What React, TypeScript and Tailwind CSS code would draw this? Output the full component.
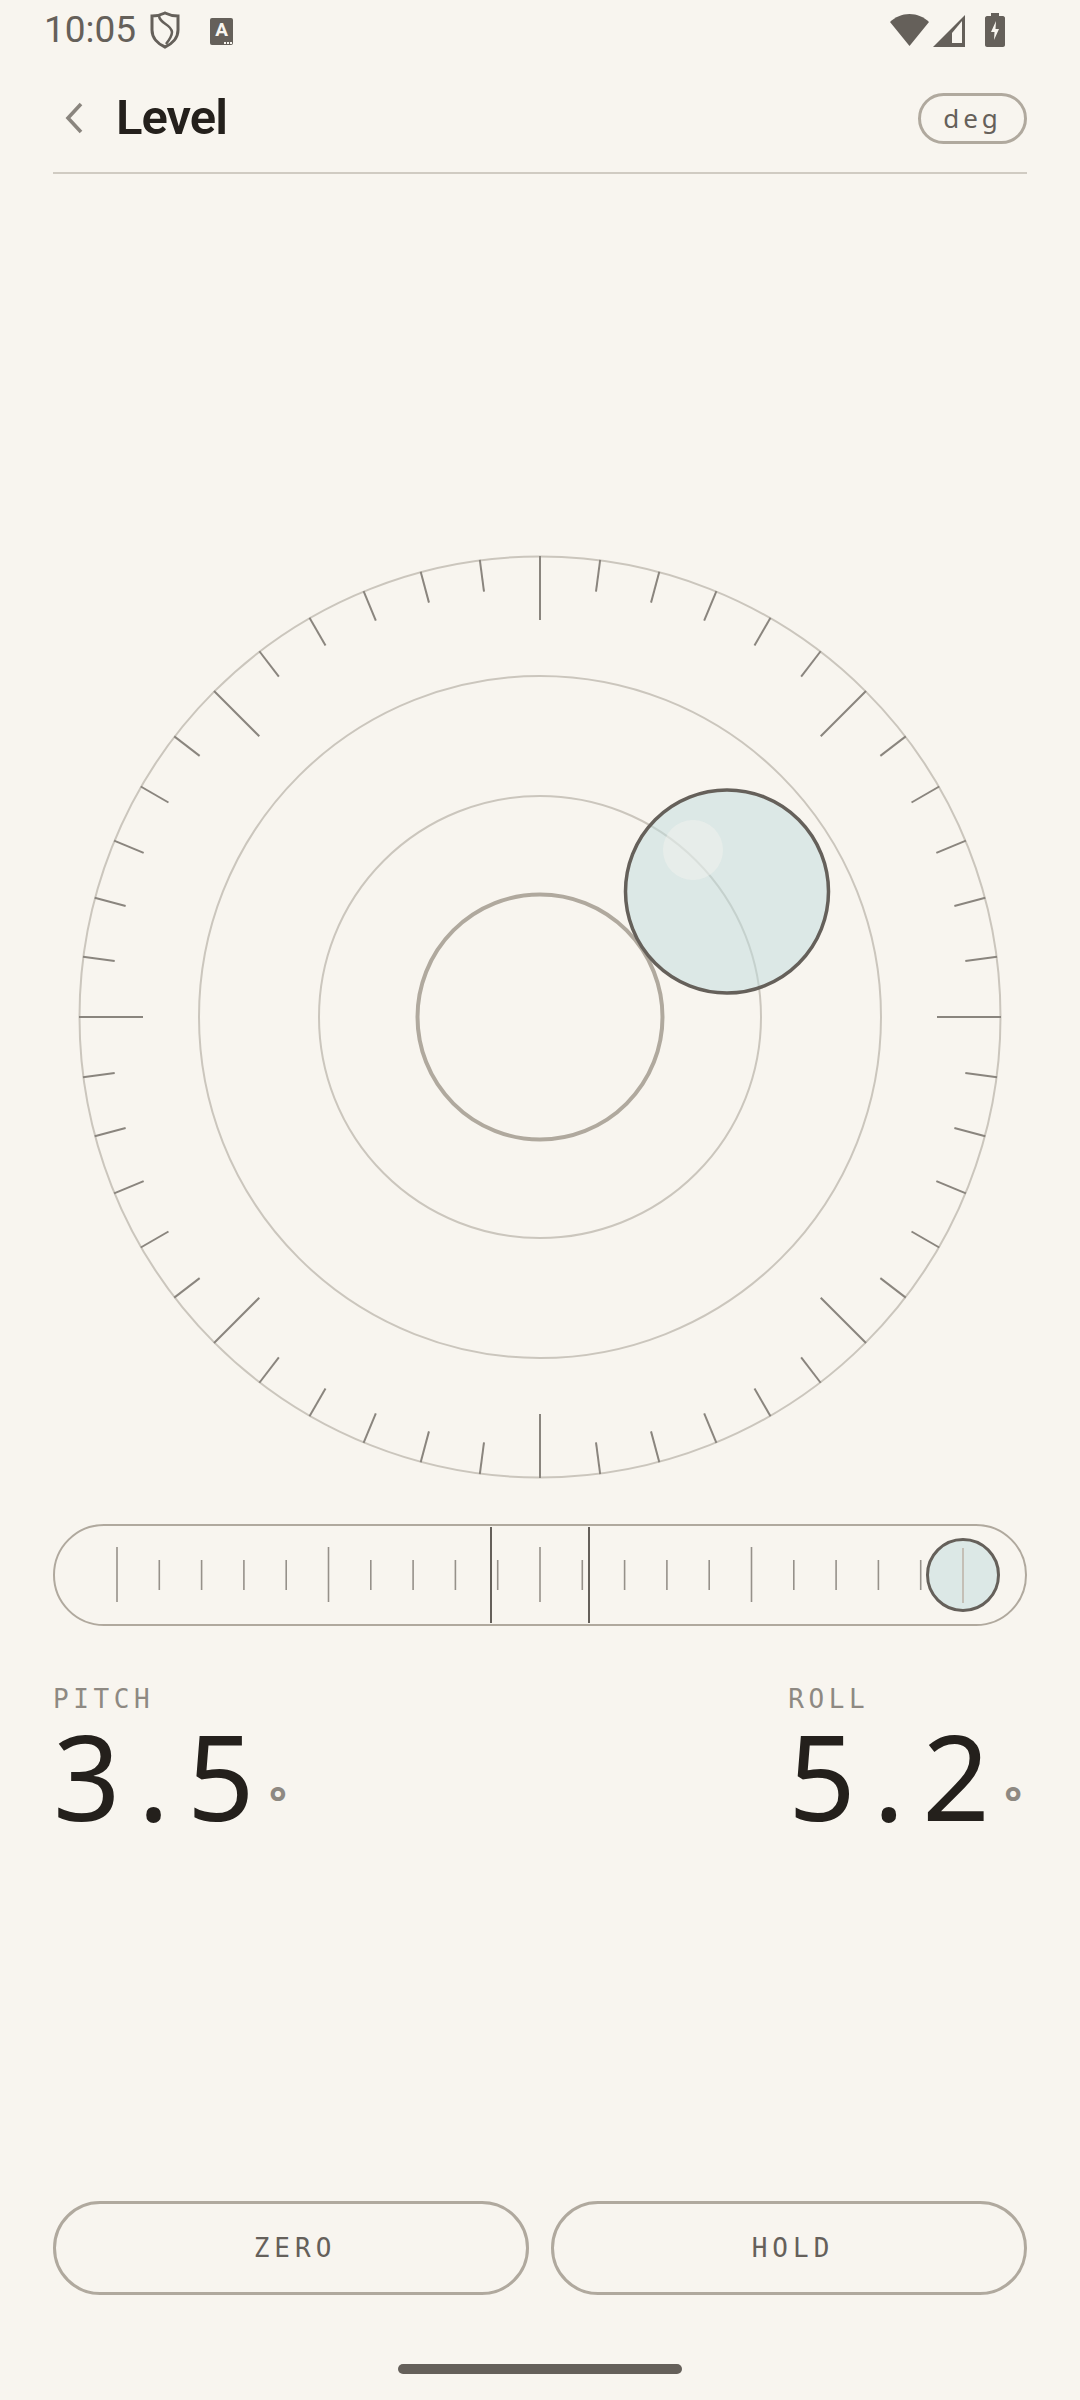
import React from "react";

const dialTicks = Array.from({ length: 48 }, (_, i) => {
  const a = (i * 7.5 * Math.PI) / 180;
  const long = i % 6 === 0;
  const r1 = 461;
  const r2 = long ? 397 : 429;
  return {
    x1: 462 + Math.sin(a) * r1,
    y1: 462 - Math.cos(a) * r1,
    x2: 462 + Math.sin(a) * r2,
    y2: 462 - Math.cos(a) * r2,
    key: i,
  };
});

const Dial = () => (
  <svg width="924" height="924" viewBox="0 0 924 924" className="block mx-auto shrink-0">
    <circle cx="462" cy="462" r="460.5" fill="none" stroke="#cbc6bd" strokeWidth="2" />
    <circle cx="462" cy="462" r="341" fill="none" stroke="#cbc6bd" strokeWidth="2" />
    <circle cx="462" cy="462" r="221" fill="none" stroke="#cbc6bd" strokeWidth="2" />
    <circle cx="462" cy="462" r="122.5" fill="none" stroke="#b0a99e" strokeWidth="4" />
    {dialTicks.map((t) => (
      <line key={t.key} x1={t.x1} y1={t.y1} x2={t.x2} y2={t.y2} stroke="#8a857e" strokeWidth="2" />
    ))}
    <circle cx="649" cy="336.5" r="101.5" fill="rgb(192,219,221)" fillOpacity="0.5" stroke="#65605a" strokeWidth="3.5" />
    <circle cx="615" cy="295" r="30" fill="#f8f5ef" fillOpacity="0.4" />
  </svg>
);

const Slider = () => {
  const ticks = Array.from({ length: 21 }, (_, i) => i);
  return (
    <div className="relative mx-[53px] mt-[45px] h-[102px] shrink-0 rounded-full border-2 border-[#b0a99e]">
      <svg width="974" height="102" viewBox="0 0 974 102" className="absolute left-[-2px] top-[-2px]">
        {ticks.map((i) => {
          const x = 487 + (i - 10) * 42.3;
          const long = i % 5 === 0;
          return (
            <line
              key={i}
              x1={x}
              x2={x}
              y1={long ? 23 : 36}
              y2={long ? 78 : 66}
              stroke="#96918a"
              strokeWidth="1.6"
            />
          );
        })}
        <line x1="438" x2="438" y1="3" y2="99" stroke="#65605a" strokeWidth="2" />
        <line x1="536" x2="536" y1="3" y2="99" stroke="#65605a" strokeWidth="2" />
      </svg>
      <div className="absolute left-[871px] top-[12px] flex h-[74px] w-[74px] items-center justify-center rounded-full border-[3px] border-[#65605a] bg-[#dce8e6]">
        <div className="h-[55px] w-[2px] bg-[#c4bfb6]" />
      </div>
    </div>
  );
};

const Cell = ({ c }: { c: string }) => (
  <span className="inline-block w-[67px] text-center">{c}</span>
);

const Reading = ({ label, value }: { label: string; value: string }) => (
  <div className="flex flex-col">
    <div className="h-[30px] text-[26px] leading-[30px] tracking-[4.6px] text-[#8e8982] font-['DejaVu_Sans_Mono','Liberation_Mono',monospace] font-light">
      {label}
    </div>
    <div className="mt-[8px] flex h-[108px] items-center text-[118px] leading-[108px] font-[450] text-[#24201c] font-['Noto_Sans',sans-serif]">
      {value.split("").map((c, i) => (
        <Cell key={i} c={c} />
      ))}
      <span className="ml-[15px] mt-[50px] text-[42px] leading-[42px] font-bold text-[#8e8982] font-['Noto_Sans',sans-serif]">°</span>
    </div>
  </div>
);

const Btn = ({ label }: { label: string }) => (
  <button className="flex h-[94px] flex-1 items-center justify-center rounded-full border-[3px] border-[#b0a99e] pl-[8px] text-[26px] tracking-[5px] text-[#65605a] font-['DejaVu_Sans_Mono','Liberation_Mono',monospace]">
    {label}
  </button>
);

export default function App() {
  return (
    <div className="flex h-[2400px] w-[1080px] flex-col overflow-hidden bg-[#f8f5ef]">
      <div className="flex h-[60px] shrink-0 items-center pl-[44px] pr-[75px] text-[#65605a]">
        <span className="text-[37px] leading-[60px] font-['Roboto',sans-serif]">10:05</span>
        <svg width="32" height="38" viewBox="0 0 32 38" className="ml-[13px]">
          <path d="M16 2 C20 4 25 5 29 5 L29 19 C29 27 23 33 16 36 C9 33 3 27 3 19 L3 5 C7 5 12 4 16 2 Z" fill="none" stroke="#65605a" strokeWidth="3" />
          <path d="M10 5 C11 13 22 13 23 21 C23 25 21 28 17 33" fill="none" stroke="#65605a" strokeWidth="2.5" />
        </svg>
        <div className="relative ml-[29px] mt-[2px] flex h-[27px] w-[23px] items-start justify-center rounded-[2px] bg-[#65605a]">
          <span className="mt-[3px] text-[19px] leading-[17px] font-bold text-[#f8f5ef] font-['Roboto',sans-serif]">A</span>
          <div className="absolute bottom-[1px] right-[1px] flex gap-[1px]">
            <div className="h-[2px] w-[2px] bg-[#f8f5ef]" />
            <div className="h-[2px] w-[2px] bg-[#f8f5ef]" />
            <div className="h-[2px] w-[2px] bg-[#f8f5ef]" />
          </div>
        </div>
        <div className="flex-1" />
        <svg width="40" height="34" viewBox="0 0 40 34">
          <path d="M19.5 33 L0 9 C5 4 12 1 19.5 1 C27 1 34 4 39 9 Z" fill="#65605a" />
        </svg>
        <svg width="34" height="34" viewBox="0 0 34 34" className="ml-[3px]">
          <path d="M0 34 L32 2 L32 34 Z" fill="#65605a" />
          <path d="M19 30 L19 20 L29 8 L29 30 Z" fill="#f8f5ef" />
        </svg>
        <svg width="20" height="34" viewBox="0 0 20 34" className="ml-[18px]">
          <path d="M6 0 H14 V3 H18 C19 3 20 4 20 5 V32 C20 33 19 34 18 34 H2 C1 34 0 33 0 32 V5 C0 4 1 3 2 3 H6 Z" fill="#65605a" />
          <path d="M11 8 L6 19 H9.5 L9 27 L14 16 H10.5 Z" fill="#f8f5ef" />
        </svg>
      </div>

      <div className="mx-[53px] flex h-[114px] shrink-0 items-center border-b-2 border-[#d0cbc2] pt-[4px]">
        <svg width="20" height="32" viewBox="0 0 20 32" className="ml-[11px] mt-[-1px]">
          <path d="M17 2 L4 16 L17 30" fill="none" stroke="#8a857e" strokeWidth="3.6" />
        </svg>
        <span className="ml-[32px] text-[49px] font-semibold tracking-[-1px] text-[#24201c] font-['Roboto',sans-serif]">Level</span>
        <div className="ml-auto flex h-[51px] w-[109px] items-center justify-center rounded-full border-[3px] border-[#b0a99e] text-[26px] tracking-[4px] text-[#65605a] font-['Noto_Sans',sans-serif]">
          deg
        </div>
      </div>

      <div className="mt-[381px] shrink-0">
        <Dial />
      </div>

      <Slider />

      <div className="ml-[53px] mr-[58px] mt-[58px] flex justify-between">
        <Reading label="PITCH" value="3.5" />
        <Reading label="ROLL" value="5.2" />
      </div>

      <div className="mx-[53px] mt-auto flex gap-[22px]">
        <Btn label="ZERO" />
        <Btn label="HOLD" />
      </div>

      <div className="mx-auto mb-[26px] mt-[69px] h-[10px] w-[284px] rounded-full bg-[#65605a]" />
    </div>
  );
}
